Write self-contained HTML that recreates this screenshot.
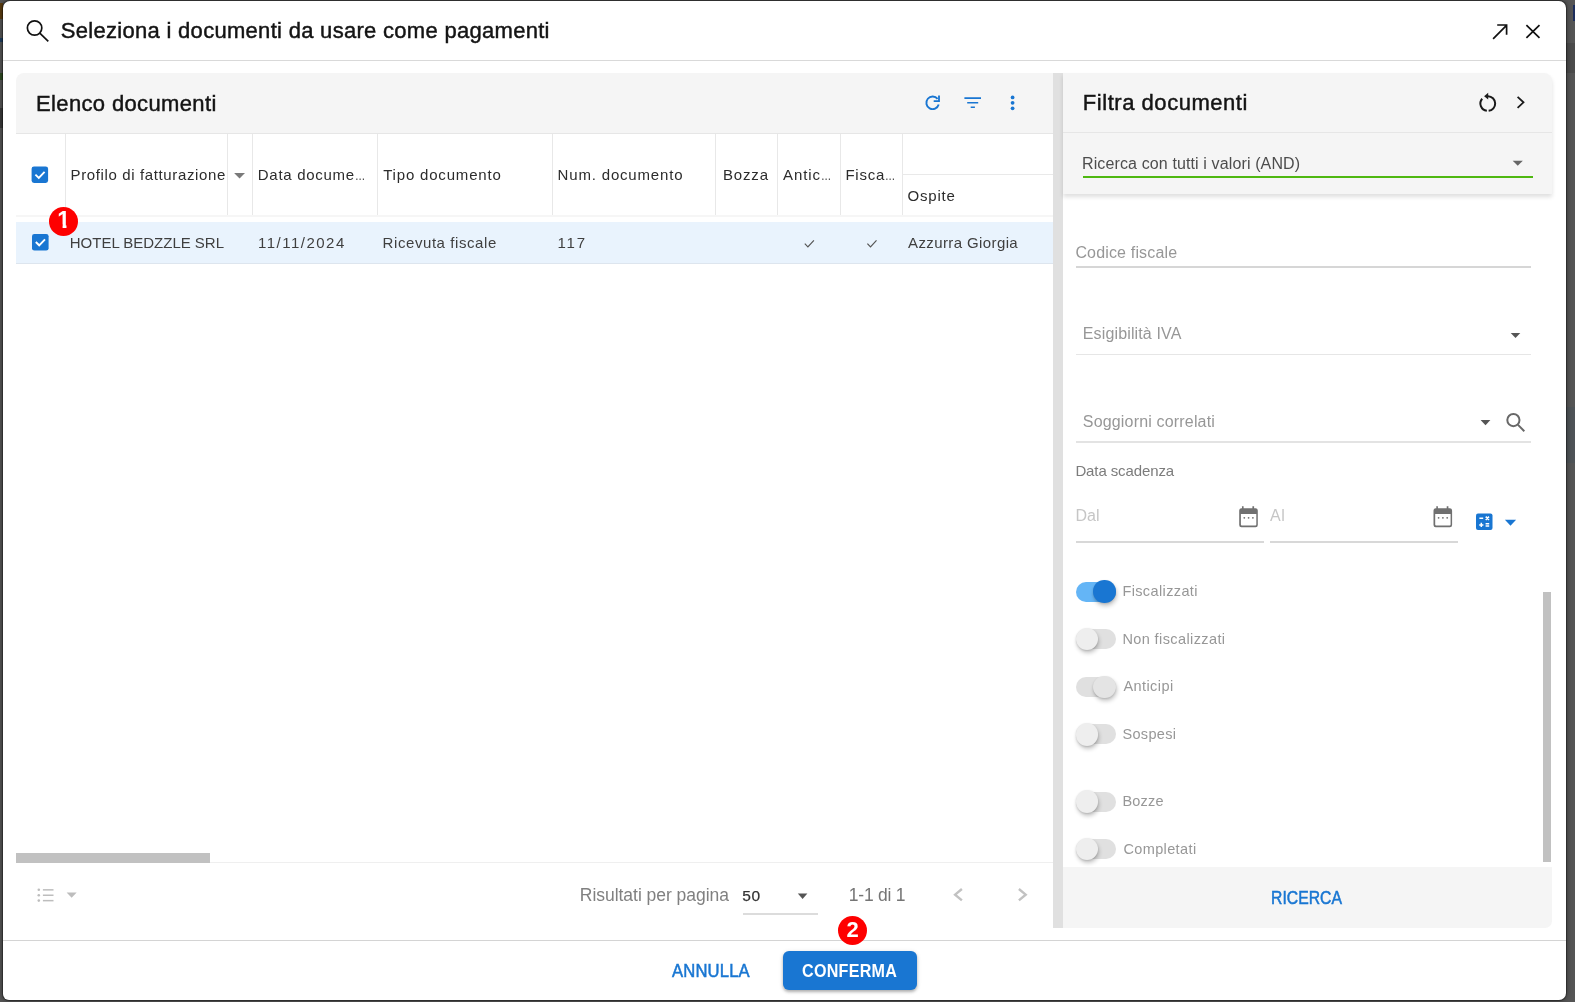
<!DOCTYPE html>
<html lang="it">
<head>
<meta charset="utf-8">
<title>Seleziona i documenti da usare come pagamenti</title>
<style>
*{box-sizing:border-box;margin:0;padding:0}
html,body{width:1575px;height:1002px;overflow:hidden}
body{background:#555;font-family:"Liberation Sans",Arial,sans-serif;position:relative;color:#212121}
.abs,.t{position:absolute}
.t{white-space:nowrap;line-height:20px;height:20px;transform-origin:0 50%}
#dlg{position:absolute;left:3px;top:1px;width:1563px;height:999px;background:#fff;border-radius:7px 7px 7px 6px;box-shadow:0 0 0 1px rgba(0,0,0,.3),0 0 5px 1px rgba(0,0,0,.38)}
.hl{position:absolute;height:1px;background:#e0e0e0}
.vl{position:absolute;width:1px;background:#e8e8e8;top:134px;height:82px}
svg{position:absolute;overflow:visible}
.sw{position:absolute;left:1076px;width:40px;height:20px;border-radius:10px;background:#e0e0e0}
.sw i{position:absolute;top:-1.4px;left:-.2px;width:22.6px;height:22.6px;border-radius:50%;background:#eee;box-shadow:1px 3px 4px rgba(0,0,0,.22),0 1px 2px rgba(0,0,0,.12)}
.sw.on{background:#64b5f6}
.sw.on i{left:17.4px;background:#1976d2}
.sw.mid i{left:17.4px;background:#e4e4e4}
.el{display:inline-block;transform:scaleX(.68);transform-origin:0 50%;letter-spacing:0}
.badge{position:absolute;width:29.6px;height:29.6px;border-radius:50%;background:#fe0000;color:#fff;font-weight:bold;font-size:22px;line-height:29.6px;text-align:center}
</style>
</head>
<body>
<!-- backdrop remnants -->
<div class="abs" style="left:0;top:3px;width:3px;height:16px;background:#5a3c10"></div>
<div class="abs" style="left:0;top:38px;width:3px;height:4px;background:#1e3d5e"></div>
<div class="abs" style="left:0;top:73px;width:3px;height:7px;background:#2f4a23"></div>
<div class="abs" style="left:0;top:108px;width:3px;height:20px;background:#3a3a3a"></div>
<div class="abs" style="left:1566px;top:43px;width:9px;height:30px;background:#4b4b4b"></div>
<div class="abs" style="left:1573px;top:5px;width:2px;height:16px;background:#1c2d5c"></div>
<div class="abs" style="left:1566px;top:407px;width:9px;height:56px;background:#4e5357"></div>

<div id="dlg"></div>

<!-- ===== dialog header ===== -->
<div class="hl" style="left:3px;top:60px;width:1563px;background:#d9d9d9"></div>

<!-- ===== left panel ===== -->
<div class="abs" style="left:16px;top:73px;width:1037px;height:60px;background:#f5f5f5;border-radius:8px 0 0 0"></div>
<div class="hl" style="left:16px;top:133px;width:1037px;background:#e6e6e6"></div>

<!-- grid header -->
<div class="vl" style="left:65px"></div>
<div class="vl" style="left:227px"></div>
<div class="vl" style="left:252px"></div>
<div class="vl" style="left:377px"></div>
<div class="vl" style="left:552px"></div>
<div class="vl" style="left:715px"></div>
<div class="vl" style="left:777px"></div>
<div class="vl" style="left:840px"></div>
<div class="vl" style="left:902px"></div>
<div class="hl" style="left:902px;top:174px;width:151px;background:#e9e9e9"></div>
<div class="abs" style="left:16px;top:215px;width:1037px;height:2px;background:#f6f6f6"></div>

<!-- grid row -->
<div class="abs" style="left:16px;top:222.2px;width:1037px;height:41.6px;background:#e9f3fd;border-bottom:1px solid #dde5ee"></div>

<!-- horizontal scrollbar + pagination -->
<div class="hl" style="left:16px;top:862px;width:1037px;background:#efefef"></div>
<div class="abs" style="left:16px;top:853.4px;width:194px;height:10px;background:#c1c1c1"></div>
<div class="abs" style="left:743px;top:913px;width:74.6px;height:1.5px;background:#dcdcdc"></div>

<!-- splitter -->
<div class="abs" style="left:1053px;top:73px;width:10px;height:855px;background:#e0e0e0"></div>

<!-- ===== right panel ===== -->
<div class="abs" style="left:1063px;top:73px;width:489.4px;height:120.5px;background:#f5f5f5;border-radius:0 8px 0 0;box-shadow:0 3px 4px rgba(0,0,0,.13)"></div>
<div class="hl" style="left:1063px;top:132.3px;width:489.4px;background:#e6e6e6"></div>
<div class="abs" style="left:1083px;top:176.3px;width:450px;height:2.2px;background:#4fb811"></div>

<div class="abs" style="left:1076px;top:266.2px;width:455px;height:1.4px;background:#d6d6d6"></div>
<div class="abs" style="left:1076px;top:353.5px;width:455px;height:1.6px;background:#e6e6e6"></div>
<div class="abs" style="left:1076px;top:441px;width:455px;height:2px;background:#e3e3e3"></div>
<div class="abs" style="left:1076px;top:541.3px;width:188px;height:1.4px;background:#d8d8d8"></div>
<div class="abs" style="left:1270px;top:541.3px;width:188px;height:1.4px;background:#d8d8d8"></div>

<div class="sw on" style="top:581.8px"><i></i></div>
<div class="sw" style="top:629px"><i></i></div>
<div class="sw mid" style="top:677px"><i></i></div>
<div class="sw" style="top:724.3px"><i></i></div>
<div class="sw" style="top:791.6px"><i></i></div>
<div class="sw" style="top:839px"><i></i></div>

<div class="abs" style="left:1543px;top:592px;width:7.8px;height:270px;background:#c1c1c1"></div>
<div class="abs" style="left:1063px;top:866.5px;width:489.4px;height:61px;background:#f5f5f5;border-radius:0 0 7px 0"></div>

<!-- ===== dialog footer ===== -->
<div class="hl" style="left:3px;top:940px;width:1563px;background:#d4d4d4"></div>
<div class="abs" style="left:783px;top:950.6px;width:133.7px;height:39.6px;background:#1976d2;border-radius:6px;box-shadow:0 2px 3px rgba(0,0,0,.25),0 1px 5px rgba(0,0,0,.12)"></div>

<!-- ===== icons (page coordinates) ===== -->
<svg style="left:0;top:0" width="1575" height="1002" viewBox="0 0 1575 1002" fill="none">
<!-- header search -->
<g stroke="#111" stroke-width="1.7"><circle cx="34.6" cy="28" r="7.2"/><path d="M39.8 33.1 L48.3 41.3"/></g>
<!-- open-in-new arrow + close -->
<g stroke="#111" stroke-width="1.7"><path d="M1493.1 38.9 L1506.5 25.3 M1497.2 25 H1506.6 V34.7"/><path d="M1526.4 25.1 L1539.5 37.9 M1539.5 25.1 L1526.4 37.9"/></g>
<!-- toolbar: refresh, filter, more -->
<g stroke="#1976d2"><path d="M937.6 98.9 A6.3 6.3 0 1 0 938.7 104.5" stroke-width="1.9"/><path d="M939 95.4 V101.1 H933.7" stroke-width="1.8"/><path d="M964.4 98.1 H981 M967.2 102.8 H978.2 M970.7 107.3 H974.9" stroke-width="1.6"/></g>
<g fill="#1976d2"><circle cx="1012.6" cy="97.4" r="1.9"/><circle cx="1012.6" cy="102.8" r="1.9"/><circle cx="1012.6" cy="108.3" r="1.9"/></g>
<!-- header checkbox + sort arrow -->
<rect x="31.6" y="166.4" width="16.5" height="16.5" rx="2.4" fill="#1976d2"/><path d="M35.4 174.6 L38.8 177.9 L44.6 171.9" stroke="#fff" stroke-width="1.9"/>
<path d="M234.1 173 H245 L239.55 178.6 Z" fill="#7a7a7a"/>
<!-- row checkbox + check marks -->
<rect x="32" y="233.9" width="16.6" height="16.7" rx="2.4" fill="#1976d2"/><path d="M35.8 242 L39.2 245.3 L45 239.3" stroke="#fff" stroke-width="1.9"/>
<path d="M804.8 243.7 L807.9 246.8 L813.9 240.3" stroke="#555" stroke-width="1.2"/>
<path d="M867.4 243.7 L870.5 246.8 L876.5 240.3" stroke="#555" stroke-width="1.2"/>
<!-- pagination icons -->
<g fill="#bdbdbd"><circle cx="38.8" cy="889.8" r="1.3"/><circle cx="38.8" cy="895.3" r="1.3"/><circle cx="38.8" cy="900.6" r="1.3"/><rect x="42.9" y="889.1" width="10.6" height="1.5"/><rect x="42.9" y="894.5" width="10.6" height="1.5"/><rect x="42.9" y="899.9" width="10.6" height="1.5"/><path d="M66.6 892.6 H76.7 L71.65 897.8 Z"/></g>
<path d="M797.8 893.6 H807.4 L802.6 898.9 Z" fill="#555"/>
<g stroke="#c2c2c2" stroke-width="2.4"><path d="M961.9 889 L955.1 894.7 L961.9 900.4"/><path d="M1018.9 889 L1025.7 894.7 L1018.9 900.4"/></g>
<!-- filter header icons -->
<g stroke="#1a1a1a" stroke-width="2"><path d="M1488 96.2 A7.35 7.35 0 0 1 1488.65 110.85"/><path d="M1486.85 110.85 A7.35 7.35 0 0 1 1482.2 98.73"/><path d="M1484.1 96.2 L1488.2 92.8 L1488.2 99.5 Z" fill="#1a1a1a" stroke="none"/><path d="M1517.6 96.8 L1523.5 102.3 L1517.6 107.8" stroke-width="1.8"/></g>
<path d="M1512.7 160.7 H1522.8 L1517.75 165.8 Z" fill="#666"/>
<!-- field arrows + search -->
<path d="M1510.7 333 H1520.3 L1515.5 338 Z" fill="#555"/>
<path d="M1480.6 419.9 H1490.4 L1485.5 425.3 Z" fill="#555"/>
<g stroke="#686868" stroke-width="2"><circle cx="1513.4" cy="420.1" r="6.1"/><path d="M1517.8 424.6 L1524.3 431.2"/></g>
<!-- calendars -->
<g fill="#707070"><path d="M1241.9 506.2 h1.7 v2.1 h8.8 v-2.1 h1.7 v2.1 h1.5 a2.2 2.2 0 0 1 2.2 2.2 v14.5 a2.2 2.2 0 0 1 -2.2 2.2 h-14.2 a2.2 2.2 0 0 1 -2.2 -2.2 v-14.5 a2.2 2.2 0 0 1 2.2 -2.2 h.7 z M1240.9 514 v10.6 a.9 .9 0 0 0 .9 .9 h13.6 a.9 .9 0 0 0 .9 -.9 v-10.6 z" fill-rule="evenodd"/><circle cx="1244.3" cy="517.8" r=".9"/><circle cx="1248.6" cy="517.8" r=".9"/><circle cx="1252.9" cy="517.8" r=".9"/></g>
<g fill="#707070" transform="translate(194.3 0)"><path d="M1241.9 506.2 h1.7 v2.1 h8.8 v-2.1 h1.7 v2.1 h1.5 a2.2 2.2 0 0 1 2.2 2.2 v14.5 a2.2 2.2 0 0 1 -2.2 2.2 h-14.2 a2.2 2.2 0 0 1 -2.2 -2.2 v-14.5 a2.2 2.2 0 0 1 2.2 -2.2 h.7 z M1240.9 514 v10.6 a.9 .9 0 0 0 .9 .9 h13.6 a.9 .9 0 0 0 .9 -.9 v-10.6 z" fill-rule="evenodd"/><circle cx="1244.3" cy="517.8" r=".9"/><circle cx="1248.6" cy="517.8" r=".9"/><circle cx="1252.9" cy="517.8" r=".9"/></g>
<!-- calculator + arrow -->
<rect x="1476" y="513.5" width="16.5" height="16.5" rx="2" fill="#1976d2"/>
<g stroke="#fff" stroke-width="1.5"><path d="M1479.4 518.3 H1483.2 M1485.7 516.6 L1489 519.9 M1489 516.6 L1485.7 519.9 M1479.2 524.9 H1483.4 M1481.3 522.8 V527 M1485.6 523.8 H1489.2 M1485.6 526.1 H1489.2"/></g>
<path d="M1504.9 519.7 H1516.1 L1510.5 525.7 Z" fill="#1976d2"/>
</svg>

<div id="txt" style="position:absolute;left:0;top:0;width:1575px;height:1002px;will-change:transform">
<div class="t" id="title" style="left:60.80px;top:20.98px;font-size:22px;color:#141414;letter-spacing:0.295px;-webkit-text-stroke:.45px #141414">Seleziona i documenti da usare come pagamenti</div>
<div class="t" id="elenco" style="left:36.00px;top:93.98px;font-size:22px;color:#141414;letter-spacing:0.360px;-webkit-text-stroke:.45px #141414">Elenco documenti</div>
<div class="t" id="filtra" style="left:1082.80px;top:93.18px;font-size:22px;color:#141414;letter-spacing:0.540px;-webkit-text-stroke:.45px #141414">Filtra documenti</div>
<div class="t" id="h_prof" style="left:70.60px;top:164.60px;font-size:15px;color:#2c2c2c;letter-spacing:0.627px;">Profilo di fatturazione</div>
<div class="t" id="h_data" style="left:257.80px;top:164.60px;font-size:15px;color:#2c2c2c;letter-spacing:0.709px;">Data docume<span class="el">…</span></div>
<div class="t" id="h_tipo" style="left:383.20px;top:164.60px;font-size:15px;color:#2c2c2c;letter-spacing:0.815px;">Tipo documento</div>
<div class="t" id="h_num" style="left:557.60px;top:164.60px;font-size:15px;color:#2c2c2c;letter-spacing:0.823px;">Num. documento</div>
<div class="t" id="h_bozza" style="left:723.00px;top:164.60px;font-size:15px;color:#2c2c2c;letter-spacing:0.825px;">Bozza</div>
<div class="t" id="h_antic" style="left:783.00px;top:164.60px;font-size:15px;color:#2c2c2c;letter-spacing:0.940px;">Antic<span class="el">…</span></div>
<div class="t" id="h_fisca" style="left:845.40px;top:164.60px;font-size:15px;color:#2c2c2c;letter-spacing:0.800px;">Fisca<span class="el">…</span></div>
<div class="t" id="h_ospite" style="left:907.60px;top:185.50px;font-size:15px;color:#2c2c2c;letter-spacing:0.760px;">Ospite</div>
<div class="t" id="r_hotel" style="left:69.80px;top:232.70px;font-size:15px;color:#3f3f3f;letter-spacing:-0.019px;">HOTEL BEDZZLE SRL</div>
<div class="t" id="r_date" style="left:258.00px;top:232.70px;font-size:15px;color:#3f3f3f;letter-spacing:1.489px;">11/11/2024</div>
<div class="t" id="r_ric" style="left:382.60px;top:232.70px;font-size:15px;color:#3f3f3f;letter-spacing:0.573px;">Ricevuta fiscale</div>
<div class="t" id="r_117" style="left:557.60px;top:232.70px;font-size:15px;color:#3f3f3f;letter-spacing:1.750px;">117</div>
<div class="t" id="r_azz" style="left:908.00px;top:232.70px;font-size:15px;color:#3f3f3f;letter-spacing:0.393px;">Azzurra Giorgia</div>
<div class="t" id="rpp" style="left:579.80px;top:885.24px;font-size:17.5px;color:#808080;letter-spacing:-0.032px;">Risultati per pagina</div>
<div class="t" id="n50" style="left:742.20px;top:886.43px;font-size:15.5px;color:#333;letter-spacing:0.700px;-webkit-text-stroke:.25px #333">50</div>
<div class="t" id="pg" style="left:848.80px;top:885.14px;font-size:17.5px;color:#757575;letter-spacing:-0.229px;">1-1 di 1</div>
<div class="t" id="ricsel" style="left:1082.00px;top:154.06px;font-size:16px;color:#4d4d4d;letter-spacing:0.123px;">Ricerca con tutti i valori (AND)</div>
<div class="t" id="cf" style="left:1075.40px;top:242.56px;font-size:16px;color:#979797;letter-spacing:0.162px;">Codice fiscale</div>
<div class="t" id="eiva" style="left:1082.80px;top:323.76px;font-size:16px;color:#979797;letter-spacing:0.136px;">Esigibilità IVA</div>
<div class="t" id="sogg" style="left:1082.80px;top:412.36px;font-size:16px;color:#979797;letter-spacing:0.172px;">Soggiorni correlati</div>
<div class="t" id="dsc" style="left:1075.40px;top:460.70px;font-size:15px;color:#7c7c7c;letter-spacing:-0.108px;">Data scadenza</div>
<div class="t" id="dal" style="left:1075.40px;top:506.46px;font-size:16px;color:#c6c6c6;letter-spacing:0.100px;">Dal</div>
<div class="t" id="al" style="left:1270.00px;top:506.46px;font-size:16px;color:#c6c6c6;letter-spacing:0.600px;">Al</div>
<div class="t" id="s1" style="left:1122.40px;top:580.88px;font-size:14.5px;color:#979797;letter-spacing:0.382px;">Fiscalizzati</div>
<div class="t" id="s2" style="left:1122.40px;top:629.48px;font-size:14.5px;color:#979797;letter-spacing:0.400px;">Non fiscalizzati</div>
<div class="t" id="s3" style="left:1123.40px;top:675.78px;font-size:14.5px;color:#979797;letter-spacing:0.429px;">Anticipi</div>
<div class="t" id="s4" style="left:1122.40px;top:723.88px;font-size:14.5px;color:#979797;letter-spacing:0.350px;">Sospesi</div>
<div class="t" id="s5" style="left:1122.40px;top:790.68px;font-size:14.5px;color:#979797;letter-spacing:0.225px;">Bozze</div>
<div class="t" id="s6" style="left:1123.40px;top:838.58px;font-size:14.5px;color:#979797;letter-spacing:0.378px;">Completati</div>
<div class="t" id="ricerca" style="left:1271.40px;top:888.24px;font-size:17.5px;color:#1976d2;letter-spacing:0.017px;-webkit-text-stroke:.5px #1976d2;transform:scaleX(.9)">RICERCA</div>
<div class="t" id="annulla" style="left:672.00px;top:960.84px;font-size:17.5px;color:#1976d2;letter-spacing:0.167px;-webkit-text-stroke:.5px #1976d2;transform:scaleX(.95)">ANNULLA</div>
<div class="t" id="conferma" style="left:801.80px;top:960.84px;font-size:17.5px;color:#fff;letter-spacing:0.286px;font-weight:bold;transform:scaleX(.92)">CONFERMA</div>
<div class="badge" style="left:48.8px;top:206.6px;font-size:23px"><span id="b1" style="position:relative;display:inline-block;left:0;top:-.8px;clip-path:polygon(0 0,100% 0,100% 18.8px,9.3px 18.8px,9.3px 100%,5.4px 100%,5.4px 18.8px,0 18.8px)">1</span></div>
<div class="badge" style="left:837.8px;top:915.6px"><span style="position:relative;top:-.6px">2</span></div>
</div>
</body>
</html>
